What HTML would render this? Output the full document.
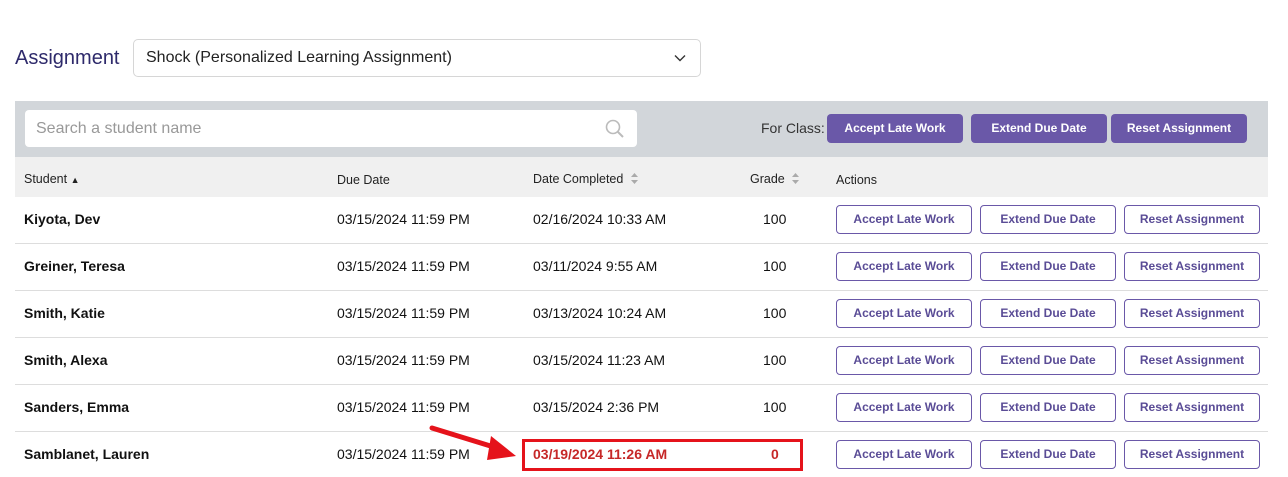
<!DOCTYPE html>
<html><head><style>
*{box-sizing:border-box;margin:0;padding:0}
body{width:1288px;height:477px;background:#fff;font-family:"Liberation Sans",Arial,sans-serif;position:relative;overflow:hidden;color:#111}
.a{position:absolute}
.lbl{left:15px;top:47px;font-size:20px;color:#2e2a6b}
.sel{left:133px;top:39px;width:568px;height:38px;border:1px solid #d6d6d6;border-radius:5px;font-size:16px;padding:9px 12px;color:#222}
.bar{left:15px;top:101px;width:1253px;height:56px;background:#d2d6da}
.search{left:25px;top:110px;width:612px;height:37px;background:#fff;border-radius:4px;font-size:16px;color:#999;padding:10px 11px}
.hdr{left:15px;top:157px;width:1253px;height:40px;background:#f0f0f0}
.h{font-size:12.5px;top:172px;color:#222}
.cb{height:29px;background:#6a58a8;color:#fff;border-radius:4px;font-size:12px;font-weight:bold;text-align:center;line-height:29px}
.row{left:15px;width:1253px;height:47px;border-bottom:1px solid #ddd}
.t{font-size:14px}
.b{font-weight:bold}
.ob{height:29px;border:1px solid #6a58a8;border-radius:4px;color:#5a4c96;font-size:12px;font-weight:bold;text-align:center;line-height:27px;background:#fff}
</style></head><body>
<div class="a lbl">Assignment</div>
<div class="a sel">Shock (Personalized Learning Assignment)
<svg class="a" style="right:14px;top:14px" width="12" height="8" viewBox="0 0 12 8"><path d="M1 1.5l5 5 5-5" stroke="#333" stroke-width="1.4" fill="none"/></svg></div>
<div class="a bar"></div>
<div class="a search">Search a student name
<svg class="a" style="right:12px;top:9px" width="20" height="20" viewBox="0 0 20 20"><circle cx="8" cy="8" r="6.5" stroke="#bbb" stroke-width="1.6" fill="none"/><path d="M13 13l5 5" stroke="#bbb" stroke-width="2"/></svg></div>
<div class="a" style="left:761px;top:120px;font-size:14px;color:#333">For Class:</div>
<div class="a cb" style="left:827px;top:114px;width:136px">Accept Late Work</div>
<div class="a cb" style="left:971px;top:114px;width:136px">Extend Due Date</div>
<div class="a cb" style="left:1111px;top:114px;width:136px">Reset Assignment</div>
<div class="a hdr"></div>
<div class="a h" style="left:24px">Student <span style="font-size:9px">▲</span></div>
<div class="a h" style="left:337px;top:173px">Due Date</div>
<div class="a h" style="left:533px">Date Completed <svg width="9" height="13" viewBox="0 0 9 13" style="vertical-align:-2px;margin-left:3px"><path d="M4.5 1L8 5H1zM4.5 12L8 8H1z" fill="#aaa"/></svg></div>
<div class="a h" style="left:750px">Grade <svg width="9" height="13" viewBox="0 0 9 13" style="vertical-align:-2px;margin-left:3px"><path d="M4.5 1L8 5H1zM4.5 12L8 8H1z" fill="#aaa"/></svg></div>
<div class="a h" style="left:836px;top:173px">Actions</div>

<div class="a row" style="top:197px"></div>
<div class="a row" style="top:244px"></div>
<div class="a row" style="top:291px"></div>
<div class="a row" style="top:338px"></div>
<div class="a row" style="top:385px"></div>

<div class="a t b" style="left:24px;top:211px">Kiyota, Dev</div>
<div class="a t b" style="left:24px;top:258px">Greiner, Teresa</div>
<div class="a t b" style="left:24px;top:305px">Smith, Katie</div>
<div class="a t b" style="left:24px;top:352px">Smith, Alexa</div>
<div class="a t b" style="left:24px;top:399px">Sanders, Emma</div>
<div class="a t b" style="left:24px;top:446px">Samblanet, Lauren</div>

<div class="a t" style="left:337px;top:211px">03/15/2024 11:59 PM</div>
<div class="a t" style="left:337px;top:258px">03/15/2024 11:59 PM</div>
<div class="a t" style="left:337px;top:305px">03/15/2024 11:59 PM</div>
<div class="a t" style="left:337px;top:352px">03/15/2024 11:59 PM</div>
<div class="a t" style="left:337px;top:399px">03/15/2024 11:59 PM</div>
<div class="a t" style="left:337px;top:446px">03/15/2024 11:59 PM</div>

<div class="a t" style="left:533px;top:211px">02/16/2024 10:33 AM</div>
<div class="a t" style="left:533px;top:258px">03/11/2024 9:55 AM</div>
<div class="a t" style="left:533px;top:305px">03/13/2024 10:24 AM</div>
<div class="a t" style="left:533px;top:352px">03/15/2024 11:23 AM</div>
<div class="a t" style="left:533px;top:399px">03/15/2024 2:36 PM</div>
<div class="a t b" style="left:533px;top:446px;color:#c62828">03/19/2024 11:26 AM</div>

<div class="a t" style="left:763px;top:211px">100</div>
<div class="a t" style="left:763px;top:258px">100</div>
<div class="a t" style="left:763px;top:305px">100</div>
<div class="a t" style="left:763px;top:352px">100</div>
<div class="a t" style="left:763px;top:399px">100</div>
<div class="a t b" style="left:771px;top:446px;color:#c62828">0</div>

<div class="a" style="left:522px;top:439px;width:281px;height:32px;border:3px solid #e5131b"></div>
<svg class="a" style="left:425px;top:420px" width="100" height="45" viewBox="0 0 100 45"><path d="M7 8L72 28" stroke="#e5131b" stroke-width="5" stroke-linecap="round"/><path d="M66 16L91 36L62 40Z" fill="#e5131b"/></svg>

<div class="a ob" style="left:836px;top:205px;width:136px">Accept Late Work</div>
<div class="a ob" style="left:980px;top:205px;width:136px">Extend Due Date</div>
<div class="a ob" style="left:1124px;top:205px;width:136px">Reset Assignment</div>
<div class="a ob" style="left:836px;top:252px;width:136px">Accept Late Work</div>
<div class="a ob" style="left:980px;top:252px;width:136px">Extend Due Date</div>
<div class="a ob" style="left:1124px;top:252px;width:136px">Reset Assignment</div>
<div class="a ob" style="left:836px;top:299px;width:136px">Accept Late Work</div>
<div class="a ob" style="left:980px;top:299px;width:136px">Extend Due Date</div>
<div class="a ob" style="left:1124px;top:299px;width:136px">Reset Assignment</div>
<div class="a ob" style="left:836px;top:346px;width:136px">Accept Late Work</div>
<div class="a ob" style="left:980px;top:346px;width:136px">Extend Due Date</div>
<div class="a ob" style="left:1124px;top:346px;width:136px">Reset Assignment</div>
<div class="a ob" style="left:836px;top:393px;width:136px">Accept Late Work</div>
<div class="a ob" style="left:980px;top:393px;width:136px">Extend Due Date</div>
<div class="a ob" style="left:1124px;top:393px;width:136px">Reset Assignment</div>
<div class="a ob" style="left:836px;top:440px;width:136px">Accept Late Work</div>
<div class="a ob" style="left:980px;top:440px;width:136px">Extend Due Date</div>
<div class="a ob" style="left:1124px;top:440px;width:136px">Reset Assignment</div>
</body></html>
